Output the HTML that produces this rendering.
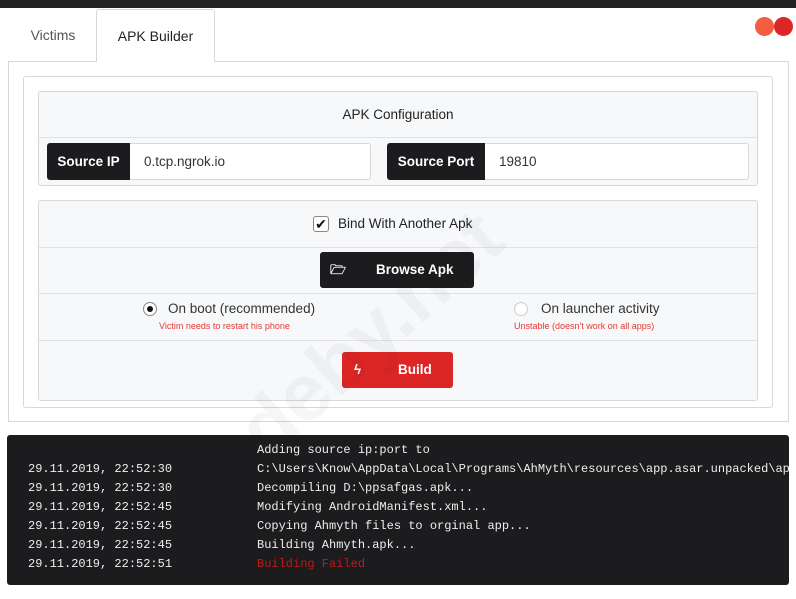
<!DOCTYPE html>
<html><head><meta charset="utf-8"><style>
*{box-sizing:border-box;margin:0;padding:0}
body{width:796px;height:599px;background:#fff;font-family:"Liberation Sans",sans-serif;position:relative;overflow:hidden;color:#333}
.abs{position:absolute}
.top{left:0;top:0;width:796px;height:8px;background:#232325}
.tab{top:9px;height:53px;font-size:14px;line-height:53px;text-align:center}
.box{border:1px solid #d8d8d8;border-radius:3px}
.lbl{background:#1c1c1e;color:#fff;font-weight:bold;font-size:13.5px;line-height:37px;text-align:center;border-radius:3px 0 0 3px}
.inp{border:1px solid #d8d8d8;border-left:none;border-radius:0 3px 3px 0;background:#fff;font-size:13.5px;line-height:35px;padding-left:14px}
.con{font-family:"Liberation Mono",monospace;font-size:12px;color:#eee;white-space:pre}
</style></head><body>
<div class="abs top"></div>
<div class="abs tab" style="left:10px;width:86px;color:#555">Victims</div>
<div class="abs tab" style="left:96px;width:119px;border:1px solid #d8d8d8;border-bottom:none;border-radius:3px 3px 0 0;background:#fff;color:#222;z-index:2">APK Builder</div>
<div class="abs" style="left:755px;top:17px;width:19px;height:19px;border-radius:50%;background:#f45d3f"></div>
<div class="abs" style="left:774px;top:17px;width:19px;height:19px;border-radius:50%;background:#dc2626"></div>
<div class="abs" style="left:8px;top:61px;width:781px;height:361px;border:1px solid #d8d8d8"></div>
<div class="abs box" style="left:23px;top:76px;width:750px;height:332px"></div>
<div class="abs box" style="left:38px;top:91px;width:720px;height:95px;background:#f7f8fa">
 <div style="height:46px;line-height:46px;text-align:center;font-size:13.5px;color:#222;border-bottom:1px solid #e2e2e2">APK Configuration</div>
</div>
<div class="abs lbl" style="left:47px;top:143px;width:83px;height:37px">Source IP</div>
<div class="abs inp" style="left:130px;top:143px;width:241px;height:37px">0.tcp.ngrok.io</div>
<div class="abs lbl" style="left:387px;top:143px;width:98px;height:37px">Source Port</div>
<div class="abs inp" style="left:485px;top:143px;width:264px;height:37px">19810</div>
<div class="abs box" style="left:38px;top:200px;width:720px;height:201px;background:#f7f8fa">
 <div style="height:47px;border-bottom:1px solid #e2e2e2;position:relative">
  <div class="abs" style="left:274px;top:15px;width:16px;height:16px;border:1px solid #888;border-radius:3px;background:#fff;font-size:14px;line-height:14px;text-align:center;color:#111">✔</div>
  <div class="abs" style="left:299px;top:15px;font-size:13.5px;color:#222">Bind With Another Apk</div>
 </div>
 <div style="height:46px;border-bottom:1px solid #e2e2e2;position:relative">
  <div class="abs" style="left:281px;top:4px;width:154px;height:36px;background:#1c1c1e;border-radius:3px;color:#fff;font-weight:bold;font-size:13.5px;line-height:36px">
   <span class="abs" style="left:10px;top:0;font-size:13px">🗁</span><span class="abs" style="left:56px">Browse Apk</span></div>
 </div>
 <div style="height:47px;border-bottom:1px solid #e2e2e2;position:relative">
  <div class="abs" style="left:104px;top:8px;width:14px;height:14px;border:1px solid #888;border-radius:50%;background:#fff"><div style="margin:3px;width:6px;height:6px;border-radius:50%;background:#111"></div></div>
  <div class="abs" style="left:129px;top:7px;font-size:13.5px;color:#333">On boot (recommended)</div>
  <div class="abs" style="left:120px;top:27px;font-size:9px;color:#e53935">Victim needs to restart his phone</div>
  <div class="abs" style="left:475px;top:8px;width:14px;height:14px;border:1px solid #ccc;border-radius:50%;background:#fff"></div>
  <div class="abs" style="left:502px;top:7px;font-size:13.5px;color:#333">On launcher activity</div>
  <div class="abs" style="left:475px;top:27px;font-size:9px;color:#e53935">Unstable (doesn't work on all apps)</div>
 </div>
 <div style="position:relative">
  <div class="abs" style="left:303px;top:11px;width:111px;height:36px;background:#dc2626;border-radius:3px;color:#fff;font-weight:bold;font-size:13.5px;line-height:36px">
   <span class="abs" style="left:12px">ϟ</span><span class="abs" style="left:56px">Build</span></div>
 </div>
</div>
<div class="abs" style="left:150px;top:470px;transform:rotate(-42deg);transform-origin:left top;font-size:80px;font-weight:bold;color:rgba(0,0,0,0.035);white-space:nowrap">codeby.net</div>
<div class="abs" style="left:7px;top:435px;width:782px;height:150px;background:#1c1c1e;border-radius:3px;overflow:hidden">
 <div class="abs con" style="left:21px;top:25px;line-height:19px">29.11.2019, 22:52:30
29.11.2019, 22:52:30
29.11.2019, 22:52:45
29.11.2019, 22:52:45
29.11.2019, 22:52:45
29.11.2019, 22:52:51</div>
 <div class="abs con" style="left:250px;top:6px;line-height:19px">Adding source ip:port to
C:\Users\Know\AppData\Local\Programs\AhMyth\resources\app.asar.unpacked\app\
Decompiling D:\ppsafgas.apk...
Modifying AndroidManifest.xml...
Copying Ahmyth files to orginal app...
Building Ahmyth.apk...
<span style="color:#c41818">Building Failed</span></div>
</div>
</body></html>
